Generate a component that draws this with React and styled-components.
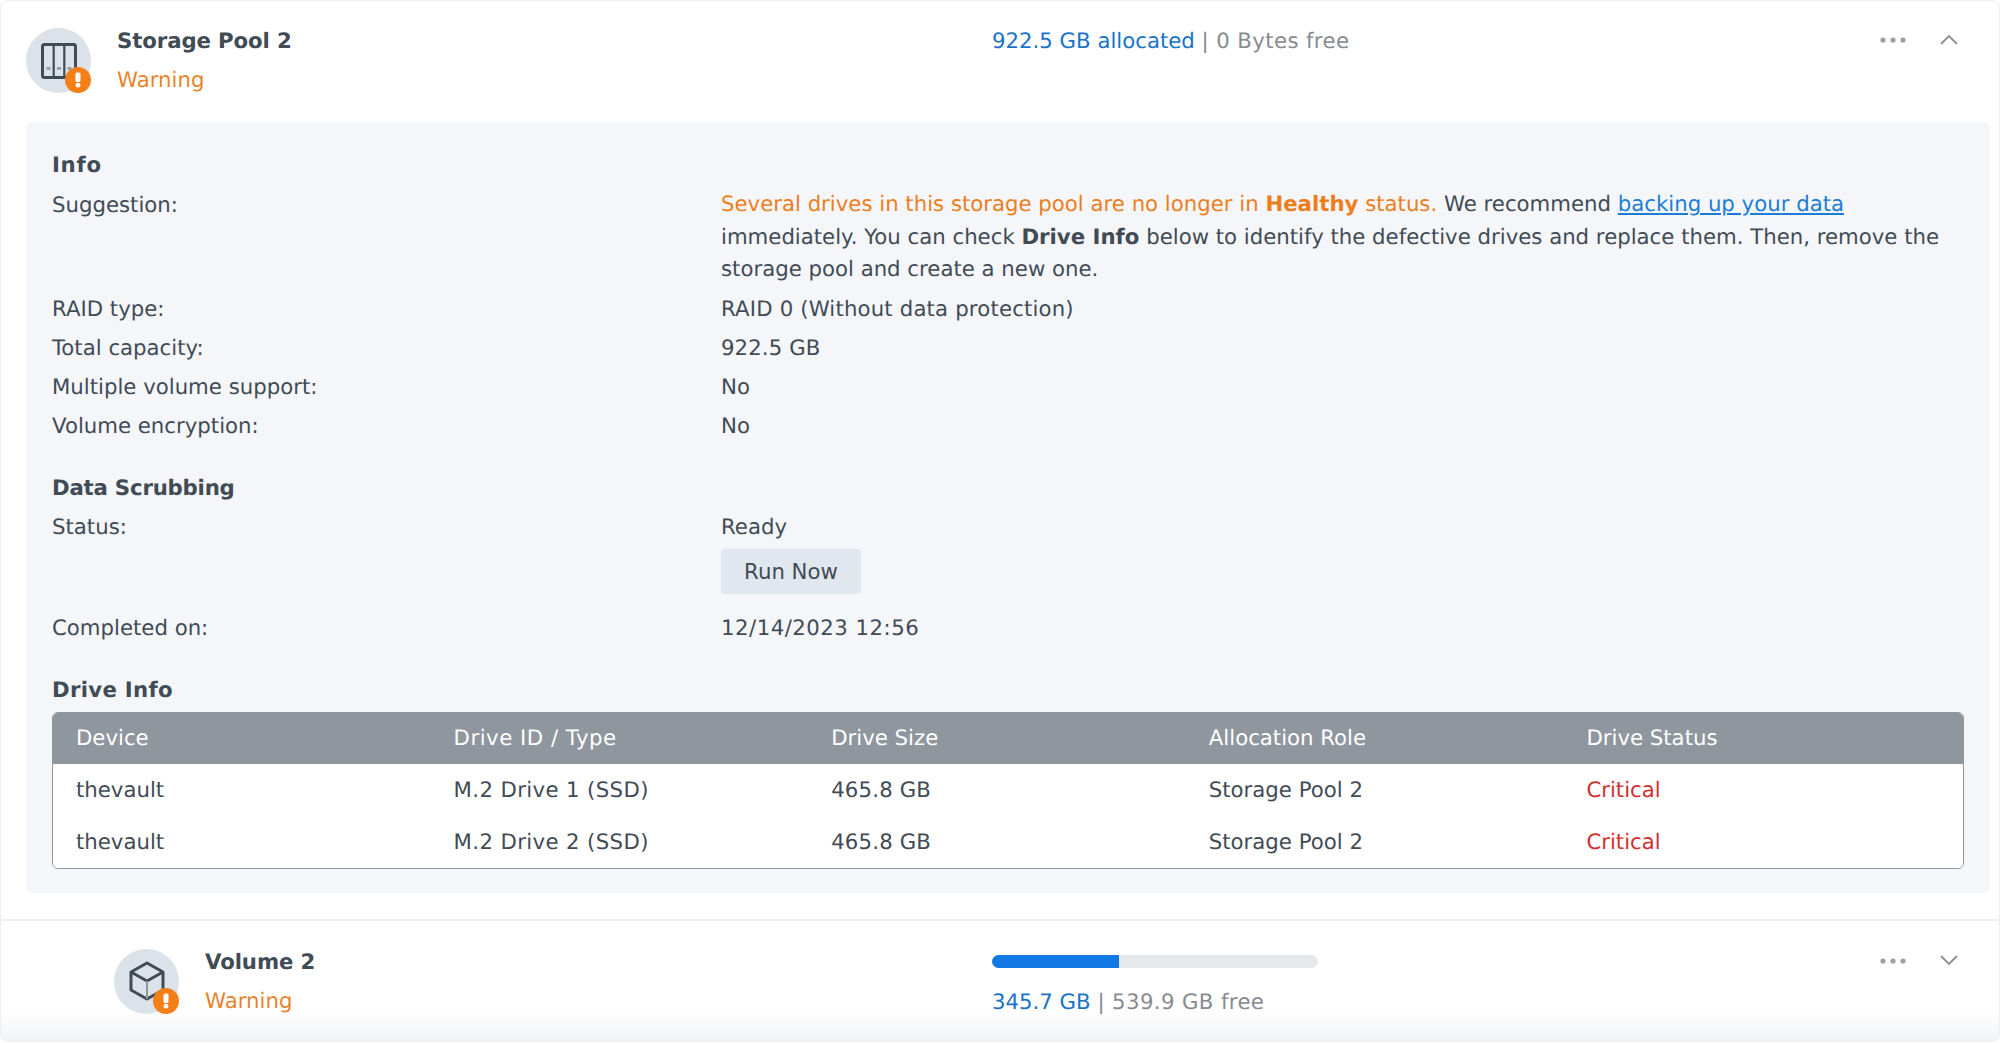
import React from "react";
import styled, { createGlobalStyle } from "styled-components";

const GlobalStyle = createGlobalStyle`
  html, body {
    margin: 0;
    background: #fff;
  }
  body {
    font-family: "DejaVu Sans", Verdana, sans-serif;
    font-size: 21.25px;
    color: #414b55;
    text-rendering: geometricPrecision;
  }
`;

const driveRows = [
  { device: "thevault", drive: "M.2 Drive 1 (SSD)" },
  { device: "thevault", drive: "M.2 Drive 2 (SSD)" },
];

function StorageIcon() {
  return (
    <svg width="36" height="36" viewBox="0 0 36 36" fill="none">
      <rect x="1.5" y="1.5" width="33" height="33" rx="2" stroke="#414b55" strokeWidth="3" />
      <path d="M12.7 2v32M23.3 2v32" stroke="#414b55" strokeWidth="2.2" />
      <path d="M5.5 25.5h4M16 25.5h4M26.5 25.5h4" stroke="#8d96a0" strokeWidth="2.5" />
    </svg>
  );
}

function CubeIcon() {
  return (
    <svg width="38" height="40" viewBox="0 0 38 40" fill="none" stroke="#414b55" strokeWidth="3" strokeLinejoin="round">
      <path d="M19 2 35 11v18l-16 9-16-9V11z" />
      <path d="M3 11l16 9 16-9" />
      <path d="M19 20v18" stroke="#8d96a0" strokeWidth="2" />
    </svg>
  );
}

function Dots() {
  return (
    <svg width="26" height="8" viewBox="0 0 26 8" fill="#9a9fa6">
      <circle cx="3" cy="4" r="2.6" />
      <circle cx="13" cy="4" r="2.6" />
      <circle cx="23" cy="4" r="2.6" />
    </svg>
  );
}

function Chevron({ $up }) {
  return (
    <ChevronIcon width="18" height="11" viewBox="0 0 18 11" fill="none" stroke="#8b9096" strokeWidth="1.8">
      <path d={$up ? "M1 10 9 2l8 8" : "M1 1l8 8 8-8"} />
    </ChevronIcon>
  );
}

function StatusIcon({ children }) {
  return (
    <IconCircle>
      {children}
      <Badge>
        <svg width="8" height="16" viewBox="0 0 8 16" fill="#fff">
          <rect x="1.5" y="0.5" width="5" height="9.5" rx="1.5" />
          <circle cx="4" cy="13.2" r="2.4" />
        </svg>
      </Badge>
    </IconCircle>
  );
}

export default function App() {
  return (
    <>
      <GlobalStyle />
      <Card>
        <PoolHeader>
          <Identity>
            <StatusIcon>
              <StorageIcon />
            </StatusIcon>
            <Names>
              <Title>Storage Pool 2</Title>
              <Warning>Warning</Warning>
            </Names>
          </Identity>
          <Usage>
            <Blue>922.5 GB allocated</Blue> <Muted>| 0 Bytes free</Muted>
          </Usage>
          <Actions>
            <Dots />
            <Chevron $up />
          </Actions>
        </PoolHeader>

        <Panel>
          <SectionTitle $track="0.7px">Info</SectionTitle>
          <InfoRow>
            <span>Suggestion:</span>
            <Suggestion>
              <Orange>
                Several drives in this storage pool are no longer in <strong>Healthy</strong> status.
              </Orange>{" "}
              We recommend <DocLink href="#">backing up your data</DocLink> immediately. You can check{" "}
              <strong>Drive Info</strong> below to identify the defective drives and replace them. Then, remove the
              storage pool and create a new one.
            </Suggestion>
          </InfoRow>
          <InfoRow>
            <span>RAID type:</span>
            <Value $track="0.16px">RAID 0 (Without data protection)</Value>
          </InfoRow>
          <InfoRow>
            <span>Total capacity:</span>
            <Value $track="0.1px">922.5 GB</Value>
          </InfoRow>
          <InfoRow>
            <span>Multiple volume support:</span>
            <span>No</span>
          </InfoRow>
          <InfoRow>
            <span>Volume encryption:</span>
            <span>No</span>
          </InfoRow>

          <SectionTitle $spaced $tight $track="-0.2px">Data Scrubbing</SectionTitle>
          <InfoRow>
            <span>Status:</span>
            <span>Ready</span>
          </InfoRow>
          <ButtonRow>
            <RunButton>Run Now</RunButton>
          </ButtonRow>
          <InfoRow>
            <span>Completed on:</span>
            <Value $track="0.48px">12/14/2023 12:56</Value>
          </InfoRow>

          <SectionTitle $spaced $track="0.3px">Drive Info</SectionTitle>
          <DriveTable>
            <TableHead>
              <span>Device</span>
              <Value $track="0.5px">Drive ID / Type</Value>
              <span>Drive Size</span>
              <span>Allocation Role</span>
              <span>Drive Status</span>
            </TableHead>
            {driveRows.map((row) => (
              <TableRow key={row.drive}>
                <span>{row.device}</span>
                <Value $track="0.37px">{row.drive}</Value>
                <Value $track="0.16px">465.8 GB</Value>
                <span>Storage Pool 2</span>
                <Critical>Critical</Critical>
              </TableRow>
            ))}
          </DriveTable>
        </Panel>

        <VolumeRow>
          <Identity $nested>
            <StatusIcon>
              <CubeIcon />
            </StatusIcon>
            <Names>
              <Title>Volume 2</Title>
              <Warning>Warning</Warning>
            </Names>
          </Identity>
          <VolumeUsage>
            <Bar>
              <BarFill style={{ width: `${(345.7 / (345.7 + 539.9)) * 100}%` }} />
            </Bar>
            <div>
              <Blue>345.7 GB</Blue> <Muted>| 539.9 GB free</Muted>
            </div>
          </VolumeUsage>
          <Actions>
            <Dots />
            <Chevron />
          </Actions>
        </VolumeRow>
      </Card>
    </>
  );
}

const Card = styled.div`
  box-sizing: border-box;
  display: flex;
  flex-direction: column;
  width: 2000px;
  height: 1042px;
  overflow: hidden;
  border: 1px solid #eceef1;
  border-radius: 8px;
  background: #fff;
`;

const PoolHeader = styled.div`
  flex: none;
  display: grid;
  grid-template-columns: 966px 1fr auto;
  height: 121px;
  box-sizing: border-box;
  padding: 28px 41px 0 25px;
`;

const VolumeRow = styled(PoolHeader)`
  flex: 1;
  height: auto;
  border-top: 2px solid #eef0f2;
  margin-top: 26px;
  padding-top: 29px;
  background: linear-gradient(to bottom, #fff 72%, #f3f4f6 100%);
`;

const Identity = styled.div`
  display: flex;
  gap: 26px;
  padding-left: ${({ $nested }) => ($nested ? "88px" : "0")};
`;

const IconCircle = styled.div`
  position: relative;
  flex: none;
  display: flex;
  align-items: center;
  justify-content: center;
  width: 65px;
  height: 65px;
  margin-top: -1px;
  border-radius: 50%;
  background: #dce2ea;
`;

const Badge = styled.div`
  position: absolute;
  right: 0;
  bottom: 0;
  display: flex;
  align-items: center;
  justify-content: center;
  width: 26px;
  height: 26px;
  border-radius: 50%;
  background: #f57f17;
`;

const Names = styled.div`
  display: flex;
  flex-direction: column;
  gap: 14px;
  line-height: 25px;
`;

const Title = styled.div`
  font-weight: 700;
  letter-spacing: -0.1px;
`;

const Warning = styled.div`
  color: #e8832a;
`;

const Usage = styled.div`
  line-height: 25px;
`;

const VolumeUsage = styled.div`
  display: flex;
  flex-direction: column;
  gap: 22.5px;
  width: 326px;
  padding-top: 5px;
  line-height: 25px;
`;

const Blue = styled.span`
  color: #1a73c8;
`;

const Muted = styled.span`
  color: #868b91;
  letter-spacing: 0.38px;
`;

const Value = styled.span`
  letter-spacing: ${({ $track }) => $track};
`;

const Actions = styled.div`
  display: flex;
  align-items: flex-start;
  gap: 34px;
  padding-top: 7px;
  height: 20px;
`;

const ChevronIcon = styled.svg`
  margin-top: -2px;
`;

const Panel = styled.div`
  flex: none;
  margin: 0 9px 0 25px;
  padding: 31px 26px 23.5px;
  border-radius: 6px;
  background: #f4f6fa;
`;

const SectionTitle = styled.div`
  font-weight: 700;
  line-height: 26px;
  letter-spacing: ${({ $track }) => $track};
  margin-top: ${({ $spaced }) => ($spaced ? "30px" : "0")};
  margin-bottom: ${({ $tight }) => ($tight ? "6px" : "7px")};
`;

const InfoRow = styled.div`
  display: grid;
  grid-template-columns: 669px 1fr;
  padding: 3px 0;
  line-height: 33px;
`;

const ButtonRow = styled.div`
  padding: 2px 0 15px 669px;
`;

const Suggestion = styled.div`
  line-height: 32.5px;
`;

const Orange = styled.span`
  color: #ed7e1c;
`;

const DocLink = styled.a`
  color: #1a7dd7;
`;

const RunButton = styled.button`
  width: 140px;
  height: 45px;
  border: none;
  border-radius: 4px;
  background: #e1e7ee;
  color: #414b55;
  font: inherit;
`;

const DriveTable = styled.div`
  margin-top: 8.5px;
  border: 1.5px solid #8f969e;
  border-radius: 6px;
  overflow: hidden;
  background: #fff;
`;

const TableHead = styled.div`
  display: grid;
  grid-template-columns: repeat(5, 377.6px);
  align-items: center;
  height: 51px;
  padding-left: 23px;
  background: #8f969e;
  color: #fff;
`;

const TableRow = styled(TableHead)`
  height: 52px;
  background: #fff;
  color: #414b55;
`;

const Critical = styled.span`
  color: #d32f2f;
`;

const Bar = styled.div`
  height: 13px;
  border-radius: 7px;
  overflow: hidden;
  background: #e6e8eb;
`;

const BarFill = styled.div`
  height: 100%;
  background: #1278e3;
`;
